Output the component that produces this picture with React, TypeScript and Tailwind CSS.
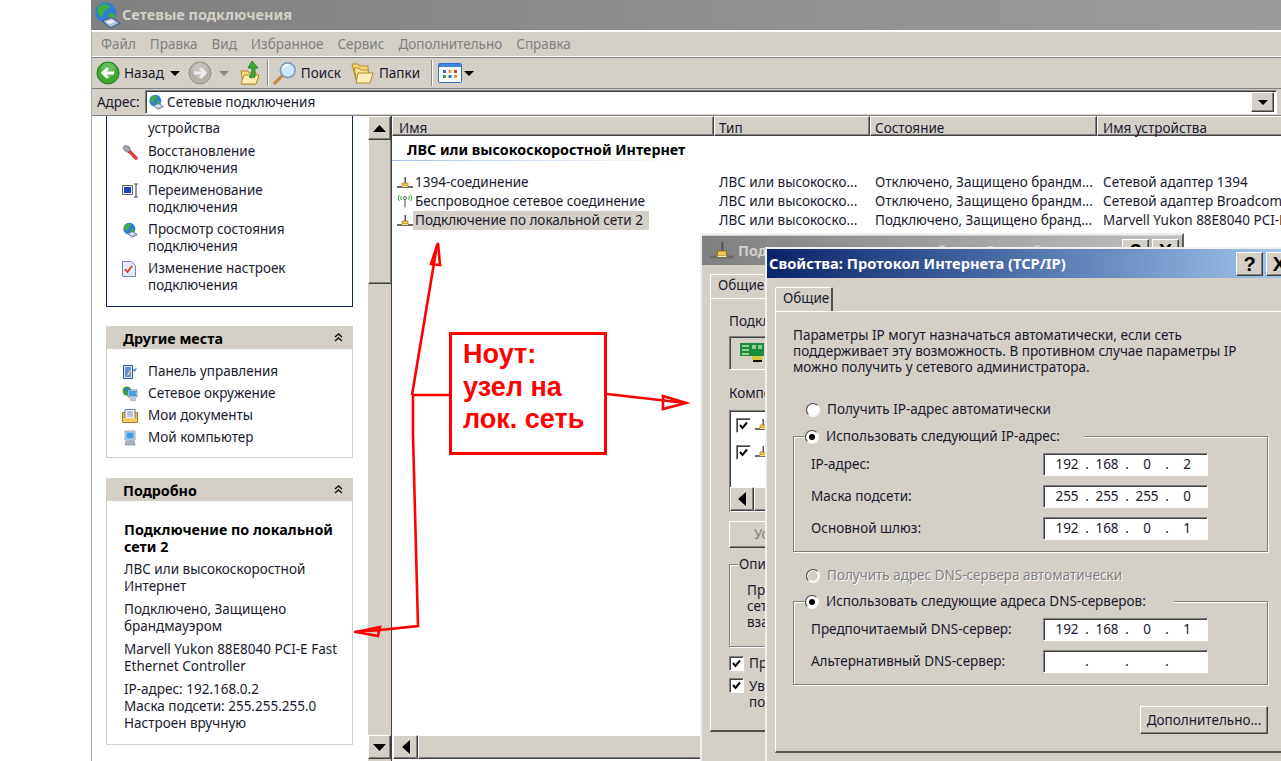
import React from 'react'

const raised = 'border border-t-white border-l-white border-b-[#404040] border-r-[#404040] shadow-[inset_-1px_-1px_0_#808080]'
const sunken = 'border border-t-[#808080] border-l-[#808080] border-b-white border-r-white shadow-[inset_1px_1px_0_#404040]'

function Globe({ size = 16 }: { size?: number }) {
  return (
    <svg width={size} height={size} viewBox="0 0 24 24" className="shrink-0">
      <circle cx="11" cy="10" r="9" fill="#2f7fd8" />
      <path d="M5 5c3-3 7-3 9-1 0 3-3 3-4 5-2 2-1 4-3 5-3-2-4-6-2-9zM14 10c3 0 5 1 5 3-1 3-3 4-5 4-1-2-1-5 0-7z" fill="#3fae3c" />
      <path d="M8 17l8-3 7 5-8 4z" fill="#aebfd8" stroke="#4a5f8a" strokeWidth="1" />
      <path d="M11 18l5-2 3 2-5 2z" fill="#e8eef8" />
    </svg>
  )
}

function Lan({ size = 16 }: { size?: number }) {
  return (
    <svg width={size} height={size} viewBox="0 0 16 16" className="shrink-0">
      <path d="M7.500 2h1.500v8H7.500z" fill="#555" />
      <path d="M5 8h6v3H5z" fill="#f0c850" stroke="#8a6a10" strokeWidth="0.600" />
      <path d="M0 11h16v2H0z" fill="#6a6a6a" />
      <path d="M5 11h6v1H5z" fill="#ffe88a" />
    </svg>
  )
}

function Wireless() {
  return (
    <svg width="16" height="16" viewBox="0 0 16 16" className="shrink-0">
      <path d="M2.500 1c-1.500 2-1.500 4 0 6M4.500 2c-1 1-1 3 0 4M13.500 1c1.500 2 1.500 4 0 6M11.500 2c1 1 1 3 0 4" fill="none" stroke="#2ea82e" strokeWidth="1" />
      <circle cx="8" cy="4" r="1.600" fill="#d8d8d8" stroke="#444" strokeWidth="0.700" />
      <path d="M8 5.500v8" stroke="#666" strokeWidth="1.200" />
    </svg>
  )
}

function BackIcon({ disabled }: { disabled?: boolean }) {
  const fill = disabled ? '#b4b0a8' : '#3da82e'
  return (
    <svg width="24" height="24" viewBox="0 0 24 24" className="shrink-0">
      <circle cx="12" cy="12" r="11" fill={fill} stroke={disabled ? '#8f8c85' : '#1f7a1a'} />
      <circle cx="12" cy="9" r="7.500" fill="#fff" opacity="0.220" />
      {disabled ? (
        <path d="M6 12h10M12 7l5 5-5 5" fill="none" stroke="#eee" strokeWidth="3" />
      ) : (
        <path d="M18 12H8M12 7l-5 5 5 5" fill="none" stroke="#fff" strokeWidth="3" />
      )}
    </svg>
  )
}

function UpIcon() {
  return (
    <svg width="20" height="26" viewBox="0 0 20 26" className="shrink-0">
      <path d="M1 11h7l1 2h7v11H3z" fill="#f8dd82" stroke="#b08a2a" />
      <path d="M1 24l3-9h15l-3 9z" fill="#fdeeae" stroke="#b08a2a" />
      <path d="M12 1l6 7h-3v9c-2 1-5 1-6 0 2-2 3-5 3-9H8z" fill="#3aa836" stroke="#1c7a1c" strokeWidth="0.800" />
    </svg>
  )
}

function SearchIcon() {
  return (
    <svg width="24" height="26" viewBox="0 0 26 26" className="shrink-0">
      <path d="M11 15L2 24" stroke="#c88a3a" strokeWidth="3.500" strokeLinecap="round" />
      <circle cx="16" cy="10" r="8" fill="#cfe6fb" stroke="#7f99b8" strokeWidth="1.800" />
      <path d="M11 8c1-3 4-4 6-4" stroke="#fff" strokeWidth="2" fill="none" />
    </svg>
  )
}

function FoldersIcon() {
  return (
    <svg width="23" height="23" viewBox="0 0 23 23" className="shrink-0">
      <path d="M1 2h6l2 2h8v14H5z" fill="#f5d878" stroke="#b08a2a" />
      <path d="M3 6h5l2 2h7l2 12H6z" fill="#f8e08e" stroke="#b08a2a" />
      <path d="M5 21l2-10h15l-3 10z" fill="#fdf0ba" stroke="#b08a2a" />
    </svg>
  )
}

function ViewsIcon() {
  return (
    <svg width="24" height="20" viewBox="0 0 24 20" className="shrink-0">
      <rect x="0.500" y="0.500" width="23" height="19" rx="1" fill="#fff" stroke="#2f6fc8" />
      <path d="M1 1h22v3H1z" fill="#3f86e0" />
      <path d="M5 7h3v3H5z" fill="#2e6fd0" />
      <path d="M10.500 7h3v3h-3z" fill="#d8a028" />
      <path d="M16 7h3v3h-3z" fill="#c83a2a" />
      <path d="M5 12h3v3H5z" fill="#3aa040" />
      <path d="M10.500 12h3v3h-3z" fill="#2e6fd0" />
      <path d="M16 12h3v3h-3z" fill="#d8a028" />
    </svg>
  )
}

function Wrench() {
  return (
    <svg width="16" height="16" viewBox="0 0 16 16" className="shrink-0">
      <path d="M7 7l7 7" stroke="#d8433a" strokeWidth="3.600" strokeLinecap="round" />
      <path d="M1 3.500L3.500 1 5 3 6 2c2 1 2.500 3 2 5L7 8C5 8.500 2 7 1 3.500z" fill="#a4a8b2" stroke="#50545c" strokeWidth="0.700" />
    </svg>
  )
}

function Rename() {
  return (
    <svg width="16" height="16" viewBox="0 0 16 16" className="shrink-0">
      <path d="M0.500 2.500h10v9h-10z" fill="#e8e8e8" stroke="#667" />
      <path d="M2 4h7v6H2z" fill="#1f45b8" />
      <path d="M12 1h4M14 1v13M12 14h4" stroke="#556" strokeWidth="1.200" />
    </svg>
  )
}

function DocCheck() {
  return (
    <svg width="14" height="16" viewBox="0 0 14 16" className="shrink-0">
      <path d="M0.500 0.500h9l4 4v11H0.500z" fill="#e4ebf8" stroke="#7a88a8" />
      <path d="M3 8l2.500 3L10 5" fill="none" stroke="#e03a2a" strokeWidth="1.800" />
    </svg>
  )
}

function ControlPanel() {
  return (
    <svg width="16" height="16" viewBox="0 0 16 16" className="shrink-0">
      <path d="M1.500 1.500h9v13h-9z" fill="#dfe8f6" stroke="#2f4f8a" />
      <path d="M3 3h6v10H3z" fill="#5f8fd8" />
      <path d="M5 11l3-5 1 1-3 5z" fill="#f5d878" />
      <path d="M10 6l5-2-2 4z" fill="#4a90d8" />
    </svg>
  )
}

function NetPlaces() {
  return (
    <svg width="16" height="16" viewBox="0 0 16 16" className="shrink-0">
      <circle cx="5" cy="5" r="4.500" fill="#3f9a3a" />
      <path d="M3 2h4v3H3z" fill="#2f7fd8" />
      <path d="M6 4h9v7H6z" fill="#cfe0f4" stroke="#5a6f8f" strokeWidth="0.700" />
      <path d="M7 5h7v5H7z" fill="#4aa0e8" />
      <path d="M8 12h6v3H8z" fill="#b8c0cc" />
    </svg>
  )
}

function Docs() {
  return (
    <svg width="16" height="16" viewBox="0 0 16 16" className="shrink-0">
      <path d="M0.500 4.500h15v10h-15z" fill="#e8b848" stroke="#a07a20" />
      <path d="M3 1.500h10v9H3z" fill="#f4f6fc" stroke="#6a7a9a" />
      <path d="M5 4h6M5 6h6M5 8h6" stroke="#7a8ab0" />
      <path d="M1 10h14v4H1z" fill="#f3cd68" />
    </svg>
  )
}

function Computer() {
  return (
    <svg width="16" height="16" viewBox="0 0 16 16" className="shrink-0">
      <path d="M3 1h10v9H3z" fill="#cfdcf0" stroke="#7a8aa8" strokeWidth="0.700" />
      <path d="M4.500 2.500h7v6h-7z" fill="#3f9ae8" />
      <path d="M4 11h8l1 4H3z" fill="#aeb6c4" stroke="#6a7284" strokeWidth="0.500" />
    </svg>
  )
}

function NicIcon() {
  return (
    <svg width="26" height="22" viewBox="0 0 26 22" className="shrink-0">
      <path d="M0 1h24v13H0z" fill="#1f8a3a" />
      <path d="M2 3h7v2H2zM2 7h7v2H2zM2 11h7v2H2zM12 3h4v4h-4zM18 3h4v4h-4z" fill="#8fd08f" />
      <path d="M12 14h10v4H12z" fill="#d8c838" />
      <path d="M13 18h9v2h-9z" fill="#111" />
    </svg>
  )
}

function Chevrons() {
  return (
    <svg width="9" height="9" viewBox="0 0 9 9" className="shrink-0">
      <path d="M1 4l3.500-3L8 4M1 8l3.500-3L8 8" fill="none" stroke="#111" strokeWidth="1.400" />
    </svg>
  )
}

function Tri({ dir, gray, small }: { dir: 'up' | 'down' | 'left'; gray?: boolean; small?: boolean }) {
  const d = dir === 'up' ? 'M0 8L7 0l7 8z' : dir === 'down' ? 'M0 0h14L7 8z' : 'M8 0v14L0 7z'
  const box = dir === 'left' ? '0 0 8 14' : '0 0 14 8'
  const w = dir === 'left' ? 8 : small ? 10 : 13
  const h = dir === 'left' ? 14 : small ? 5 : 7
  return (
    <svg width={w} height={h} viewBox={box} preserveAspectRatio="none" className="shrink-0 block">
      <path d={d} fill={gray ? '#8a8a8a' : '#000'} />
    </svg>
  )
}

function SideItem({ icon, children }: { icon: React.ReactNode; children: React.ReactNode }) {
  return (
    <div className="flex">
      <div className="w-[26px] shrink-0 pt-[1px]">{icon}</div>
      <div className="leading-[17px]">{children}</div>
    </div>
  )
}

function SideHeader({ title }: { title: string }) {
  return (
    <div className="h-[23px] bg-[#d4d0c8] flex items-center justify-between pl-[17px] pr-[10px]">
      <span className="font-bold text-black text-[14.300px] pt-[2px]">{title}</span>
      <Chevrons />
    </div>
  )
}

function Sidebar() {
  return (
    <div className="w-[276px] shrink-0 overflow-hidden bg-white pl-[14px] text-[#1a1a2e]">
      <div className="w-[247px] h-[191px] border-x border-b border-[#0a246a] pl-[15px] pt-[4px] flex flex-col gap-[5px]">
        <div className="pl-[26px] leading-[17px] mb-[1px]">устройства</div>
        <SideItem icon={<Wrench />}>Восстановление<br />подключения</SideItem>
        <SideItem icon={<Rename />}>Переименование<br />подключения</SideItem>
        <SideItem icon={<Globe />}>Просмотр состояния<br />подключения</SideItem>
        <SideItem icon={<DocCheck />}>Изменение настроек<br />подключения</SideItem>
      </div>

      <div className="w-[247px] mt-[19px]">
        <SideHeader title="Другие места" />
        <div className="h-[109px] border-x border-b border-[#d4d0c8] pl-[15px] pt-[14px] flex flex-col gap-[5px]">
          <SideItem icon={<ControlPanel />}>Панель управления</SideItem>
          <SideItem icon={<NetPlaces />}>Сетевое окружение</SideItem>
          <SideItem icon={<Docs />}>Мои документы</SideItem>
          <SideItem icon={<Computer />}>Мой компьютер</SideItem>
        </div>
      </div>

      <div className="w-[247px] mt-[20px]">
        <SideHeader title="Подробно" />
        <div className="h-[244px] border-x border-b border-[#d4d0c8] pl-[17px] pr-[6px] pt-[20px] leading-[17px]">
          <div className="font-bold text-black text-[14.300px]">Подключение по локальной сети 2</div>
          <div className="mt-[6px]">ЛВС или высокоскоростной Интернет</div>
          <div className="mt-[6px]">Подключено, Защищено брандмауэром</div>
          <div className="mt-[6px]">Marvell Yukon 88E8040 PCI-E Fast Ethernet Controller</div>
          <div className="mt-[6px]">IP-адрес: 192.168.0.2</div>
          <div>Маска подсети: 255.255.255.0</div>
          <div>Настроен вручную</div>
        </div>
      </div>
    </div>
  )
}

function ScrollV() {
  return (
    <div className="w-[24px] shrink-0 bg-[#d4d0c8] flex flex-col border-r border-[#404040]">
      <div className={`h-[24px] flex items-center justify-center ${raised}`}><Tri dir="up" /></div>
      <div className={`h-[144px] ${raised} border-r-0 border-t-0`} />
      <div className="flex-1" />
      <div className={`h-[24px] mb-[2px] flex items-center justify-center ${raised}`}><Tri dir="down" /></div>
    </div>
  )
}

const columns = [
  { title: 'Имя', w: 'w-[322px] pl-[6px]' },
  { title: 'Тип', w: 'w-[156px] pl-[4px]' },
  { title: 'Состояние', w: 'w-[227px] pl-[4px]' },
  { title: 'Имя устройства', w: 'w-[200px] pl-[5px]' },
]

const rows = [
  { icon: <Lan />, name: '1394-соединение', state: 'Отключено, Защищено брандм...', device: 'Сетевой адаптер 1394' },
  { icon: <Wireless />, name: 'Беспроводное сетевое соединение', state: 'Отключено, Защищено брандм...', device: 'Сетевой адаптер Broadcom 802.11' },
  { icon: <Lan />, name: 'Подключение по локальной сети 2', state: 'Подключено, Защищено бранд...', device: 'Marvell Yukon 88E8040 PCI-E Fast', active: true },
]

function ListPane() {
  return (
    <div className="flex-1 min-w-0 overflow-hidden flex flex-col bg-white text-[#1a1a2e]">
      <div className="flex h-[20px] shrink-0 bg-[#d4d0c8]">
        {columns.map((c) => (
          <div key={c.title} className={`${c.w} shrink-0 leading-[22px] ${raised}`}>{c.title}</div>
        ))}
      </div>
      <div className="pl-[15px] mt-[4px] h-[20px] leading-[20px] font-bold text-black text-[14.300px]">ЛВС или высокоскоростной Интернет</div>
      <div className="h-px w-[290px] bg-linear-to-r from-[#a9c3ea] to-white" />
      <div className="mt-[12px] flex flex-col">
        {rows.map((r) => (
          <div key={r.name} className="flex h-[19px] items-center">
            <div className="w-[322px] shrink-0 pl-[5px] flex items-center">
              {r.icon}
              <span className={`pr-[6px] pl-[2px] leading-[19px] ${r.active ? 'bg-[#d4d0c8]' : ''}`}>{r.name}</span>
            </div>
            <div className="w-[156px] shrink-0 pl-[5px]">ЛВС или высокоско...</div>
            <div className="w-[228px] shrink-0 pl-[5px]">{r.state}</div>
            <div className="shrink-0 pl-[5px] whitespace-nowrap">{r.device}</div>
          </div>
        ))}
      </div>
      <div className="mt-auto mb-[2px] ml-[1px] h-[24px] flex bg-[#d4d0c8]">
        <div className={`w-[25px] flex items-center justify-center ${raised}`}><Tri dir="left" /></div>
        <div className={`flex-1 ${raised}`} />
      </div>
    </div>
  )
}

function IpField({ values }: { values: string[] }) {
  return (
    <div className={`w-[165px] h-[23px] bg-white flex items-center pl-[6px] ${sunken} text-[#1a1a2e]`}>
      {[0, 1, 2, 3].map((i) => (
        <React.Fragment key={i}>
          <span className="w-[34px] text-center shrink-0">{values[i]}</span>
          {i < 3 && <span className="w-[6px] text-center shrink-0">.</span>}
        </React.Fragment>
      ))}
    </div>
  )
}

function Radio({ checked, disabled }: { checked?: boolean; disabled?: boolean }) {
  return (
    <svg width="14" height="14" viewBox="0 0 14 14" className="shrink-0">
      <circle cx="7" cy="7" r="6.500" fill="#fff" />
      <path d="M2.400 11.600a6.500 6.500 0 0 1 9.200-9.200" fill="none" stroke="#555" strokeWidth="1.200" />
      <path d="M11.600 2.400a6.500 6.500 0 0 1-9.200 9.200" fill="none" stroke="#f4f2ee" strokeWidth="1.200" />
      {disabled && <circle cx="7" cy="7" r="5" fill="#d4d0c8" />}
      {checked && <circle cx="7" cy="7" r="3" fill="#000" />}
    </svg>
  )
}

function Check() {
  return (
    <div className={`w-[15px] h-[15px] bg-white flex items-center justify-center shrink-0 ${sunken}`}>
      <svg width="9" height="9" viewBox="0 0 9 9">
        <path d="M1 4l2.500 3L8 1.500" fill="none" stroke="#000" strokeWidth="2" />
      </svg>
    </div>
  )
}

function Group({ children, className }: { children: React.ReactNode; className: string }) {
  return (
    <div className={`relative w-[475px] border border-[#808080] shadow-[1px_1px_0_#fff,inset_1px_1px_0_#fff] ${className}`}>
      {children}
    </div>
  )
}

function FieldRow({ label, values }: { label: string; values: string[] }) {
  return (
    <div className="flex items-center justify-between pl-[17px] pr-[59px]">
      <span>{label}</span>
      <IpField values={values} />
    </div>
  )
}

function TitleButtons() {
  return (
    <div className="flex gap-[3px]">
      <div className={`w-[27px] h-[24px] bg-[#d4d0c8] flex items-center justify-center font-['Liberation_Sans',sans-serif] font-bold text-[20px] text-black ${raised}`}>?</div>
      <div className={`w-[27px] h-[24px] bg-[#d4d0c8] flex items-center justify-center font-['Liberation_Sans',sans-serif] font-bold text-[20px] text-black ${raised}`}>X</div>
    </div>
  )
}

function BackDialog() {
  return (
    <div className="absolute left-[700px] top-[233px] w-[484px] h-[540px] bg-[#d4d0c8] border-2 border-[#f0efec] border-r-[#606060] text-[#1a1a2e]">
      <div className="h-[29px] mt-[1px] bg-linear-to-r from-[#808080] to-[#c0c0c0] flex items-center justify-between pl-[8px] pr-[3px]">
        <div className="flex items-center gap-[4px] font-bold text-[#d4d0c8] text-[14.300px]">
          <Lan size={24} />
          <span>Подключение по локальной сети 2 - свойства</span>
        </div>
        <TitleButtons />
      </div>
      <div className="mx-[8px] mt-[9px] w-[54px] h-[24px] pl-[7px] border-t border-l border-white rounded-t-[2px] relative z-10">Общие</div>
      <div className="ml-[8px] h-[434px] border-l border-t border-white border-b-2 border-b-[#505050] pl-[18px] pt-[14px]">
        <div className="leading-[17px]">Подключение через:</div>
        <div className={`w-[300px] h-[34px] mt-[6px] flex items-center pl-[10px] ${sunken}`}><NicIcon /></div>
        <div className="mt-[15px] leading-[17px]">Компоненты, используемые этим подключением:</div>
        <div className={`w-[300px] h-[102px] mt-[8px] bg-white flex flex-col ${sunken}`}>
          <div className="flex items-center gap-[4px] pl-[6px] pt-[6px]">
            <Check />
            <Lan />
          </div>
          <div className="flex items-center gap-[4px] pl-[6px] pt-[11px]">
            <Check />
            <Lan />
          </div>
          <div className="mt-auto h-[24px] flex bg-[#d4d0c8]">
            <div className={`w-[24px] flex items-center justify-center ${raised}`}><Tri dir="left" /></div>
            <div className={`flex-1 ${raised}`} />
          </div>
        </div>
        <div className={`w-[100px] h-[27px] mt-[9px] pl-[24px] leading-[25px] text-[#808080] ${raised}`}>Установить</div>
        <div className="relative w-[300px] h-[83px] mt-[16px] border border-[#808080] shadow-[1px_1px_0_#fff,inset_1px_1px_0_#fff] pl-[17px] pt-[17px] leading-[16px]">
          <span className="absolute left-[8px] top-[-9px] bg-[#d4d0c8] px-[1px] leading-[17px]">Описание</span>
          Протокол<br />сети<br />взаимодействия
        </div>
        <div className="mt-[9px] flex items-center gap-[5px] h-[15px]"><Check /><span>При подключении вывести значок</span></div>
        <div className="mt-[7px] flex gap-[5px]"><Check /><span className="leading-[16px]">Уведомлять при ограниченном<br />подключении</span></div>
      </div>
    </div>
  )
}

function FrontDialog() {
  return (
    <div className="absolute left-[765px] top-[247px] w-[531px] h-[530px] bg-[#d4d0c8] border-t-2 border-l-2 border-[#f0efec] text-[#1a1a2e]">
      <div className="h-[29px] bg-linear-to-r from-[#0a246a] to-[#a6caf0] flex items-center justify-between pl-[2px] pr-[3px]">
        <span className="font-bold text-white text-[14.700px]">Свойства: Протокол Интернета (TCP/IP)</span>
        <TitleButtons />
      </div>
      <div className="ml-[8px] mt-[9px] w-[58px] h-[24px] pl-[7px] border-t border-l border-white border-r-2 border-r-[#505050] rounded-t-[2px]">Общие</div>
      <div className="ml-[8px] h-[442px] border-l border-t border-white border-b-2 border-b-[#505050] pl-[17px] pt-[15px]">
        <div className="leading-[16px]">
          Параметры IP могут назначаться автоматически, если сеть<br />
          поддерживает эту возможность. В противном случае параметры IP<br />
          можно получить у сетевого администратора.
        </div>

        <div className="mt-[26px] ml-[13px] flex items-center gap-[7px] h-[17px]"><Radio /><span>Получить IP-адрес автоматически</span></div>

        <Group className="mt-[18px] h-[116px] pt-[16px] flex flex-col gap-[9px]">
          <div className="absolute left-[11px] top-[-9px] bg-[#d4d0c8] pr-[24px] flex items-center gap-[7px] h-[17px]"><Radio checked /><span>Использовать следующий IP-адрес:</span></div>
          <FieldRow label="IP-адрес:" values={['192', '168', '0', '2']} />
          <FieldRow label="Маска подсети:" values={['255', '255', '255', '0']} />
          <FieldRow label="Основной шлюз:" values={['192', '168', '0', '1']} />
        </Group>

        <div className="mt-[15px] ml-[13px] flex items-center gap-[7px] h-[17px]">
          <Radio disabled />
          <span className="text-[#808080] [text-shadow:1px_1px_0_#fff]">Получить адрес DNS-сервера автоматически</span>
        </div>

        <Group className="mt-[17px] h-[84px] pt-[16px] flex flex-col gap-[9px]">
          <div className="absolute left-[11px] top-[-9px] bg-[#d4d0c8] pr-[28px] flex items-center gap-[7px] h-[17px]"><Radio checked /><span>Использовать следующие адреса DNS-серверов:</span></div>
          <FieldRow label="Предпочитаемый DNS-сервер:" values={['192', '168', '0', '1']} />
          <FieldRow label="Альтернативный DNS-сервер:" values={['', '', '', '']} />
        </Group>

        <div className="w-[475px] flex justify-end mt-[21px]">
          <div className={`w-[128px] h-[28px] flex items-center justify-center ${raised}`}>Дополнительно...</div>
        </div>
      </div>
    </div>
  )
}

function Annotation() {
  return (
    <>
      <svg width="1281" height="761" viewBox="0 0 1281 761" className="absolute left-0 top-0 pointer-events-none">
        <g fill="none" stroke="#ff0000" strokeWidth="2.600">
          <path d="M412 395L437 245" />
          <path d="M431 264L438 243L440 265z" />
          <path d="M413 395v40l5 191-38 4-26 2" />
          <path d="M380 627L356 632L378 636z" />
          <path d="M413 395h37" />
          <path d="M607 394L686 403" />
          <path d="M663 396L686 403L663 409z" />
        </g>
      </svg>
      <div className="absolute left-[449px] top-[332px] w-[158px] h-[123px] border-[3px] border-[#ff0000] bg-white pl-[11px] pt-[3px] font-['Liberation_Sans',sans-serif] font-bold text-[27px] leading-[32.500px] text-[#ff0000]">
        Ноут:<br />узел на<br />лок. сеть
      </div>
    </>
  )
}

export default function App() {
  return (
    <div className="relative w-[1281px] h-[761px] overflow-hidden bg-white flex font-['Noto_Sans',sans-serif] text-[13.500px]">
      <div className="w-[91px] shrink-0" />
      <div className="flex-1 min-w-0 flex flex-col">
        {/* Title bar */}
        <div className="h-[30px] shrink-0 bg-linear-to-r from-[#808080] to-[#9c9c9c] flex items-center pl-[2px] gap-[1px]">
          <Globe size={28} />
          <span className="font-bold text-[#d4d0c8] text-[14.500px]">Сетевые подключения</span>
        </div>

        <div className="flex-1 min-h-0 flex flex-col border-l border-[#a8a8a8] border-t-2 border-t-white">
          {/* Menu */}
          <div className="h-[25px] shrink-0 bg-[#d4d0c8] flex items-center gap-[14px] pl-[9px] text-[#808080] border-b border-white">
            {['Файл', 'Правка', 'Вид', 'Избранное', 'Сервис', 'Дополнительно', 'Справка'].map((m) => (
              <span key={m}>{m}</span>
            ))}
          </div>

          {/* Toolbar */}
          <div className="h-[32px] shrink-0 bg-[#d4d0c8] flex items-center pl-[4px] text-[#1a1a2e] border-b border-t border-t-[#808080] border-b-[#808080]">
            <BackIcon />
            <span className="ml-[4px]">Назад</span>
            <span className="ml-[6px]"><Tri dir="down" small /></span>
            <span className="ml-[8px]"><BackIcon disabled /></span>
            <span className="ml-[7px]"><Tri dir="down" gray small /></span>
            <span className="ml-[11px]"><UpIcon /></span>
            <div className="ml-[7px] h-[26px] w-[2px] bg-[#8a8a8a] border-r border-white" />
            <span className="ml-[4px]"><SearchIcon /></span>
            <span className="ml-[4px]">Поиск</span>
            <span className="ml-[10px]"><FoldersIcon /></span>
            <span className="ml-[5px]">Папки</span>
            <div className="ml-[11px] h-[26px] w-[2px] bg-[#8a8a8a] border-r border-white" />
            <span className="ml-[5px]"><ViewsIcon /></span>
            <span className="ml-[2px]"><Tri dir="down" small /></span>
          </div>

          {/* Address */}
          <div className="h-[27px] shrink-0 bg-[#d4d0c8] flex items-center pl-[5px] text-[#1a1a2e] border-b border-[#808080]">
            <span className="w-[48px]">Адрес:</span>
            <div className={`w-[1132px] h-[24px] bg-white flex items-center pl-[2px] gap-[3px] ${sunken}`}>
              <Globe />
              <span>Сетевые подключения</span>
              <div className={`ml-auto mr-[2px] w-[23px] h-[20px] bg-[#d4d0c8] flex items-center justify-center ${raised}`}><Tri dir="down" small /></div>
            </div>
          </div>

          {/* Body */}
          <div className="flex-1 min-h-0 flex">
            <Sidebar />
            <ScrollV />
            <ListPane />
          </div>
        </div>
      </div>

      <BackDialog />
      <FrontDialog />
      <Annotation />
    </div>
  )
}
